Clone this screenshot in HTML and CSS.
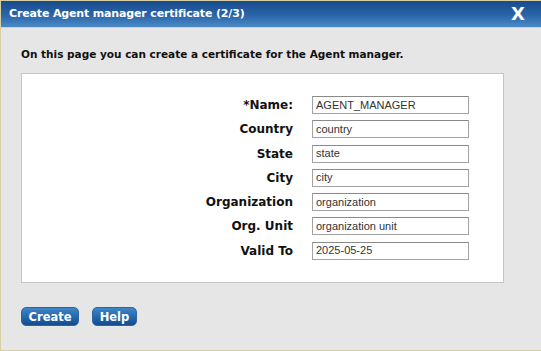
FILE: index.html
```html
<!DOCTYPE html>
<html>
<head>
<meta charset="utf-8">
<link rel="stylesheet" href="styles.css">
</head>
<body>
<div class="dialog">
  <div class="titlebar">
    <span class="title">Create Agent manager certificate (2/3)</span>
    <span class="close">X</span>
  </div>
  <div class="content">
    <p class="intro">On this page you can create a certificate for the Agent manager.</p>
    <div class="panel">
      <div class="form">
        <label class="lbl">*Name:</label><input class="inp" value="AGENT_MANAGER">
        <label class="lbl">Country</label><input class="inp" value="country">
        <label class="lbl">State</label><input class="inp" value="state">
        <label class="lbl">City</label><input class="inp" value="city">
        <label class="lbl">Organization</label><input class="inp" value="organization">
        <label class="lbl">Org. Unit</label><input class="inp" value="organization unit">
        <label class="lbl">Valid To</label><input class="inp" value="2025-05-25">
      </div>
    </div>
    <div class="buttons">
      <button class="btn btn-create">Create</button>
      <button class="btn btn-help">Help</button>
    </div>
  </div>
</div>
</body>
</html>
```
FILE: styles.css
```css
* { box-sizing: border-box; }
html, body { margin: 0; padding: 0; background: #ffffff; }
body { font-family: "DejaVu Sans", Verdana, sans-serif; }
.dialog {
  width: 541px;
  height: 351px;
  background: #e6e6e6;
  border: 1px solid #d7d0a4;
  border-right: none;
  display: flex;
  flex-direction: column;
}
.titlebar {
  height: 27px;
  background: linear-gradient(#184b8c, #2a65a8 55%, #4b8ac6);
  border-bottom: 1px solid #d9d2a8;
  display: flex;
  align-items: center;
  justify-content: space-between;
  padding: 0 16px 1px 8px;
}
.title {
  color: #fff;
  font-weight: bold;
  font-size: 11px;
  letter-spacing: -0.15px;
}
.close {
  color: #fff;
  font-weight: 900;
  font-size: 18px;
  font-family: "DejaVu Sans", Verdana, sans-serif;
  line-height: 1;
}
.content {
  padding: 0 37px 0 20px;
  flex: 1;
}
.intro {
  margin: 20px 0 13px 0;
  font-size: 10.5px;
  font-weight: bold;
  color: #111;
}
.panel {
  background: #fff;
  border: 1px solid #c6c6c6;
  height: 210px;
  padding-top: 22px;
}
.form {
  display: grid;
  grid-template-columns: 271px 157px;
  column-gap: 19px;
  row-gap: 6.3px;
  align-items: center;
}
.lbl {
  text-align: right;
  font-weight: bold;
  font-size: 12px;
  color: #111;
}
.inp {
  height: 18px;
  width: 157px;
  border: 1px solid #a3a3a3;
  border-top-color: #8a8a8a;
  padding: 0 3px 1px 3px;
  font-family: "Liberation Sans", Arial, sans-serif;
  font-size: 11px;
  line-height: 15px;
  color: #333;
  background: #fff;
  outline: none;
}
.buttons {
  display: flex;
  gap: 13px;
  margin-top: 24px;
}
.btn {
  height: 19px;
  border: 1px solid #2f64a3;
  border-radius: 5px;
  background: linear-gradient(#3f86c8, #2466aa 55%, #124d8e);
  color: #fff;
  font-family: "DejaVu Sans", Verdana, sans-serif;
  font-weight: bold;
  font-size: 11.5px;
  padding: 0;
}
.btn-create { width: 58px; }
.btn-help { width: 45px; }
```
